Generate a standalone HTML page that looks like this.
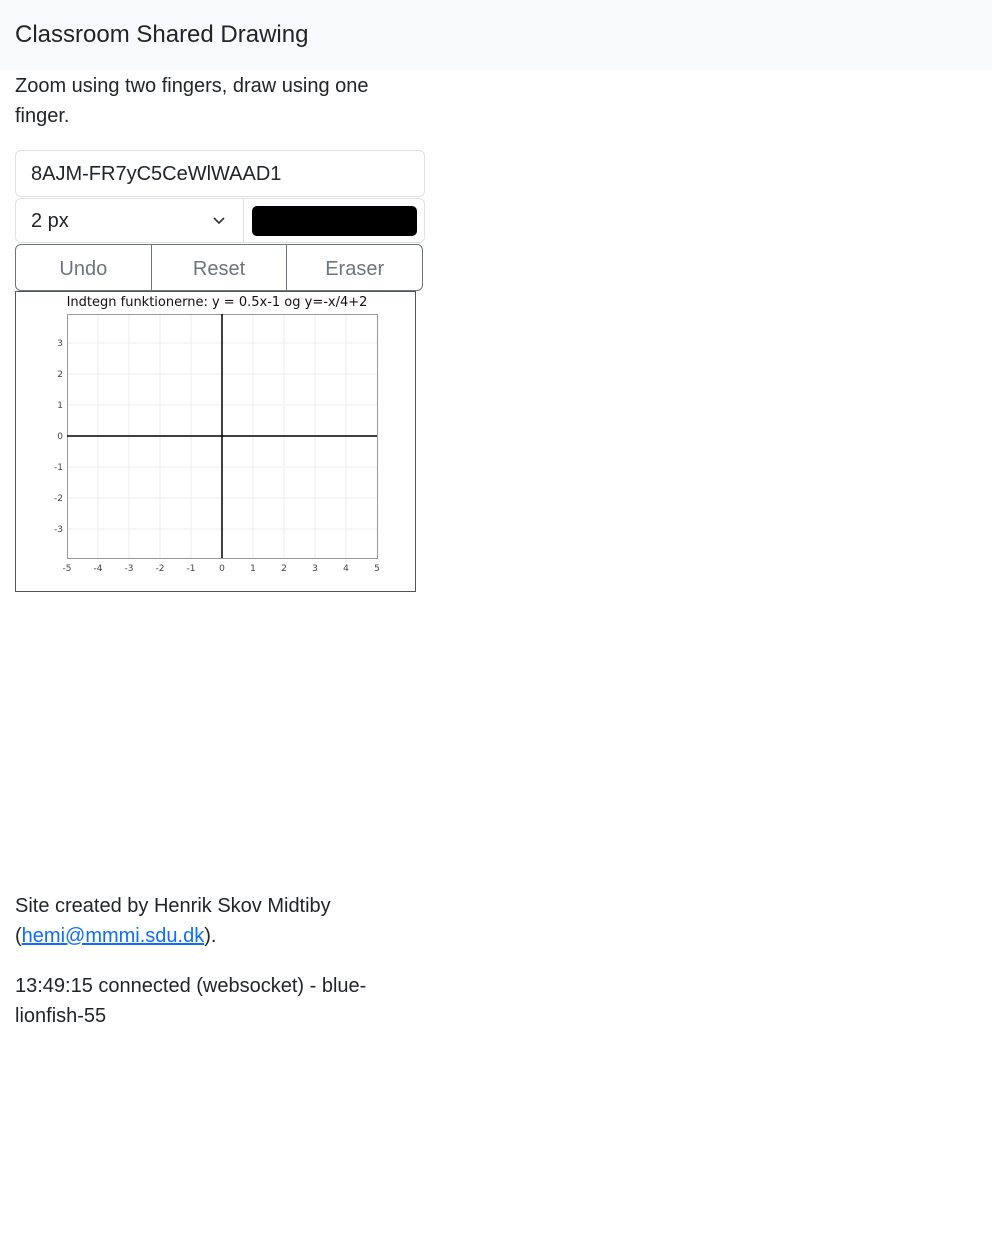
<!DOCTYPE html>
<html><head><meta charset="utf-8"><style>
body{margin:0;font-family:"Liberation Sans","DejaVu Sans",sans-serif;color:#212529;background:#fff}
.nav{height:70px;background:#f8f9fa;position:relative}
.nav span{position:absolute;left:15px;top:21px;font-size:24px}
.t{position:absolute;left:15px;font-size:20px;line-height:30px}
.box{position:absolute;border:1px solid #dee2e6;box-sizing:border-box}
a{color:#0d6efd}
</style></head><body>
<div class="nav"><span>Classroom Shared Drawing</span></div>
<div class="t" style="top:71px;width:380px">Zoom using two fingers, draw using one finger.</div>
<div class="box" style="left:15px;top:150px;width:410px;height:47px;border-radius:6px"><span style="position:absolute;left:15px;top:12px;font-size:20px">8AJM-FR7yC5CeWlWAAD1</span></div>
<div class="box" style="left:15px;top:198px;width:410px;height:45px;border-radius:6px">
<span style="position:absolute;left:15px;top:11px;font-size:20px">2 px</span>
<svg style="position:absolute;left:197px;top:17px" width="12" height="10"><path d="M1 2l5 5 5-5" fill="none" stroke="#333" stroke-width="1.6"/></svg>
<div style="position:absolute;left:227px;top:0;bottom:0;border-left:1px solid #dee2e6"></div>
<div style="position:absolute;left:236px;top:7px;width:165px;height:30px;background:#000;border-radius:5px"></div>
</div>
<div class="box" style="left:15px;top:244px;width:408px;height:47px;border-radius:6px;border-color:#6c757d;display:flex;color:#6c757d;font-size:20px">
<div style="flex:1;text-align:center;line-height:48px;border-right:1px solid #6c757d">Undo</div>
<div style="flex:1;text-align:center;line-height:48px;border-right:1px solid #6c757d">Reset</div>
<div style="flex:1;text-align:center;line-height:48px">Eraser</div>
</div>
<svg style="position:absolute;left:15px;top:291px" width="401" height="301" font-family="DejaVu Sans,sans-serif">
<rect x="0.5" y="0.5" width="400" height="300" fill="#fff" stroke="#555"/>
<text x="202" y="15" font-size="13" text-anchor="middle" fill="#111">Indtegn funktionerne: y = 0.5x-1 og y=-x/4+2</text>
<g stroke="#eeeeee">
<line x1="83" y1="23" x2="83" y2="267"/><line x1="114" y1="23" x2="114" y2="267"/><line x1="145" y1="23" x2="145" y2="267"/><line x1="176" y1="23" x2="176" y2="267"/><line x1="238" y1="23" x2="238" y2="267"/><line x1="269" y1="23" x2="269" y2="267"/><line x1="300" y1="23" x2="300" y2="267"/><line x1="331" y1="23" x2="331" y2="267"/>
<line x1="52" y1="52" x2="362" y2="52"/><line x1="52" y1="83" x2="362" y2="83"/><line x1="52" y1="114" x2="362" y2="114"/><line x1="52" y1="176" x2="362" y2="176"/><line x1="52" y1="207" x2="362" y2="207"/><line x1="52" y1="238" x2="362" y2="238"/>
</g>
<rect x="52.5" y="23.5" width="310" height="244" fill="none" stroke="#999"/>
<line x1="207" y1="23" x2="207" y2="267" stroke="#000" stroke-width="1.5"/>
<line x1="52" y1="145" x2="362" y2="145" stroke="#000" stroke-width="1.5"/>
<g font-size="9" fill="#444" text-anchor="middle">
<text x="52" y="280">-5</text><text x="83" y="280">-4</text><text x="114" y="280">-3</text><text x="145" y="280">-2</text><text x="176" y="280">-1</text><text x="207" y="280">0</text><text x="238" y="280">1</text><text x="269" y="280">2</text><text x="300" y="280">3</text><text x="331" y="280">4</text><text x="362" y="280">5</text>
</g>
<g font-size="9" fill="#444" text-anchor="end">
<text x="48" y="55">3</text><text x="48" y="86">2</text><text x="48" y="117">1</text><text x="48" y="148">0</text><text x="48" y="179">-1</text><text x="48" y="210">-2</text><text x="48" y="241">-3</text>
</g>
</svg>
<div class="t" style="top:891px;width:380px">Site created by Henrik Skov Midtiby (<a href="#">hemi@mmmi.sdu.dk</a>).</div>
<div class="t" style="top:971px;width:380px">13:49:15 connected (websocket) - blue-lionfish-55</div>
</body></html>
